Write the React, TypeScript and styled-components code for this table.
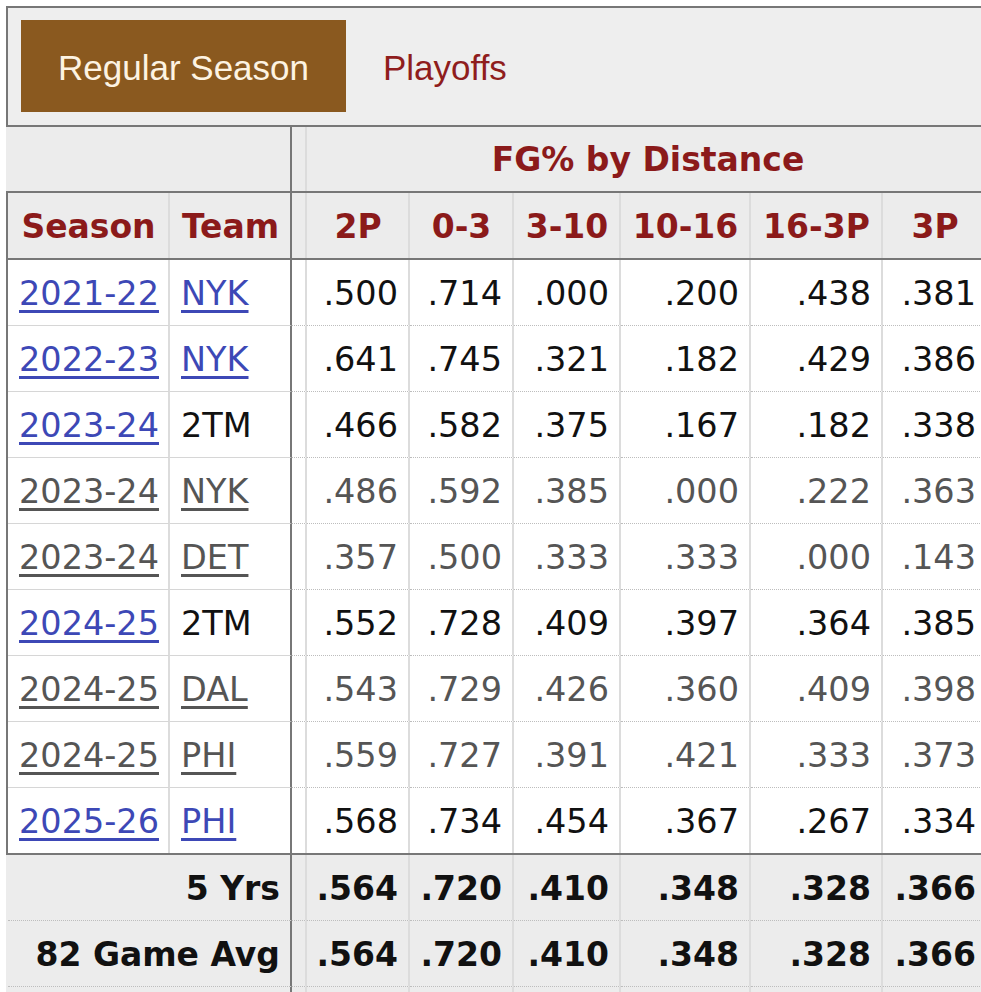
import React from "react";
import styled, { createGlobalStyle } from "styled-components";

const GlobalStyle = createGlobalStyle`
  html, body { margin: 0; padding: 0; background: #fff; overflow: hidden; }
  body { font-family: "DejaVu Sans", Verdana, sans-serif; }
`;

const Page = styled.div`
  width: 1100px;
  padding-top: 6px;
`;

const TabBar = styled.div`
  margin-left: 6px;
  display: flex;
  height: 92px;
  padding: 12px 13px 13px;
  box-sizing: content-box;
  background: #eeeeee;
  border: 2px solid #777;
  border-right: none;
`;

const TabList = styled.div`
  display: flex;
  height: 92px;
`;

const Tab = styled.div<{ $active?: boolean }>`
  display: flex;
  align-items: center;
  padding: 4px 37px 0;
  font-family: "Liberation Sans", Arial, sans-serif;
  font-size: 35px;
  color: ${(p) => (p.$active ? "#fdf3e2" : "#8f1d1d")};
  background: ${(p) => (p.$active ? "#8a591f" : "transparent")};
`;

type Variant = "over" | "head" | "data" | "foot";

const Row = styled.div<{ $variant: Variant; $last?: boolean }>`
  display: grid;
  grid-template-columns: 162px 122px 15px 103px 104px 107px 130px 132px 105px;
  margin-left: 6px;
  box-sizing: border-box;
  height: ${(p) => (p.$variant === "over" ? 64 : p.$variant === "head" ? 69 : p.$last ? 67 : 66)}px;
  border-left: 2px solid
    ${(p) => (p.$variant === "head" || p.$variant === "data" ? "#777" : "transparent")};
  border-top: ${(p) => (p.$variant === "head" ? "2px solid #777" : "none")};
  border-bottom: ${(p) =>
    p.$variant === "head" || p.$last ? "2px solid #777" : "none"};
  background: ${(p) => (p.$variant === "data" ? "#ffffff" : "#ececec")};
`;

type Line = "solid" | "dotted" | "none";

const Cell = styled.div<{
  $align?: "left" | "right" | "center";
  $edge?: "light" | "dark" | "none";
  $line?: Line;
  $span?: number;
  $head?: boolean;
  $bold?: boolean;
  $muted?: boolean;
}>`
  box-sizing: border-box;
  min-width: 0;
  display: flex;
  align-items: center;
  justify-content: ${(p) =>
    p.$align === "left" ? "flex-start" : p.$align === "center" ? "center" : "flex-end"};
  padding: 1px 10px 0 11px;
  grid-column: span ${(p) => p.$span ?? 1};
  border-right: ${(p) =>
    p.$edge === "dark" ? "2px solid #777" : p.$edge === "none" ? "none" : "2px solid #dcdcdc"};
  border-bottom: ${(p) =>
    p.$line === "solid" ? "1px solid #d6d6d6" : p.$line === "dotted" ? "1px dotted #bdbdbd" : "none"};
  font-size: ${(p) => (p.$head ? 33 : p.$bold ? 33 : 33.5)}px;
  white-space: nowrap;
  overflow: hidden;
  font-weight: ${(p) => (p.$head || p.$bold ? 700 : 400)};
  color: ${(p) => (p.$head ? "#8b1a1a" : p.$muted ? "#555" : "#111")};
`;

const GapCell = styled.div<{ $line?: Line }>`
  box-sizing: border-box;
  min-width: 0;
  border-right: 2px solid #dcdcdc;
  border-bottom: ${(p) =>
    p.$line === "dotted" ? "1px dotted #bdbdbd" : "none"};
`;

const Link = styled.a<{ $muted?: boolean }>`
  color: ${(p) => (p.$muted ? "#555" : "#3d48b6")};
  text-decoration: underline;
  text-decoration-thickness: 3px;
  text-underline-offset: 5px;
`;

type DataRow = {
  season: string;
  team: string;
  teamLink: boolean;
  muted?: boolean;
  vals: string[];
};

const rows: DataRow[] = [
  { season: "2021-22", team: "NYK", teamLink: true, vals: [".500", ".714", ".000", ".200", ".438", ".381"] },
  { season: "2022-23", team: "NYK", teamLink: true, vals: [".641", ".745", ".321", ".182", ".429", ".386"] },
  { season: "2023-24", team: "2TM", teamLink: false, vals: [".466", ".582", ".375", ".167", ".182", ".338"] },
  { season: "2023-24", team: "NYK", teamLink: true, muted: true, vals: [".486", ".592", ".385", ".000", ".222", ".363"] },
  { season: "2023-24", team: "DET", teamLink: true, muted: true, vals: [".357", ".500", ".333", ".333", ".000", ".143"] },
  { season: "2024-25", team: "2TM", teamLink: false, vals: [".552", ".728", ".409", ".397", ".364", ".385"] },
  { season: "2024-25", team: "DAL", teamLink: true, muted: true, vals: [".543", ".729", ".426", ".360", ".409", ".398"] },
  { season: "2024-25", team: "PHI", teamLink: true, muted: true, vals: [".559", ".727", ".391", ".421", ".333", ".373"] },
  { season: "2025-26", team: "PHI", teamLink: true, vals: [".568", ".734", ".454", ".367", ".267", ".334"] },
];

const footer = [
  { label: "5 Yrs", vals: [".564", ".720", ".410", ".348", ".328", ".366"] },
  { label: "82 Game Avg", vals: [".564", ".720", ".410", ".348", ".328", ".366"] },
  { label: "", vals: ["", "", "", "", "", ""] },
];

const headers = ["2P", "0-3", "3-10", "10-16", "16-3P", "3P"];

export default function App() {
  return (
    <Page>
      <GlobalStyle />
      <TabBar>
        <TabList>
          <Tab $active>Regular Season</Tab>
          <Tab>Playoffs</Tab>
        </TabList>
      </TabBar>

      <Row $variant="over">
        <Cell $span={2} $edge="dark" />
        <GapCell />
        <Cell $span={6} $edge="none" $align="center" $head>
          FG% by Distance
        </Cell>
      </Row>

      <Row $variant="head">
        <Cell $align="center" $head>Season</Cell>
        <Cell $align="center" $head $edge="dark">Team</Cell>
        <GapCell />
        {headers.map((h) => (
          <Cell key={h} $align="center" $head>
            {h}
          </Cell>
        ))}
      </Row>

      {rows.map((r, i) => {
        const last = i === rows.length - 1;
        const solid: Line = last ? "none" : "solid";
        const dotted: Line = last ? "none" : "dotted";
        return (
          <Row key={i} $variant="data" $last={last}>
            <Cell $align="left" $line={solid}>
              <Link $muted={r.muted}>{r.season}</Link>
            </Cell>
            <Cell $align="left" $line={solid} $edge="dark" $muted={r.muted}>
              {r.teamLink ? <Link $muted={r.muted}>{r.team}</Link> : r.team}
            </Cell>
            <GapCell $line={dotted} />
            {r.vals.map((v, j) => (
              <Cell key={j} $line={dotted} $muted={r.muted}>
                {v}
              </Cell>
            ))}
          </Row>
        );
      })}

      {footer.map((f, i) => (
        <Row key={i} $variant="foot">
          <Cell $span={2} $edge="dark" $line="dotted" $bold>
            {f.label}
          </Cell>
          <GapCell $line="dotted" />
          {f.vals.map((v, j) => (
            <Cell key={j} $line="dotted" $bold>
              {v}
            </Cell>
          ))}
        </Row>
      ))}
    </Page>
  );
}
